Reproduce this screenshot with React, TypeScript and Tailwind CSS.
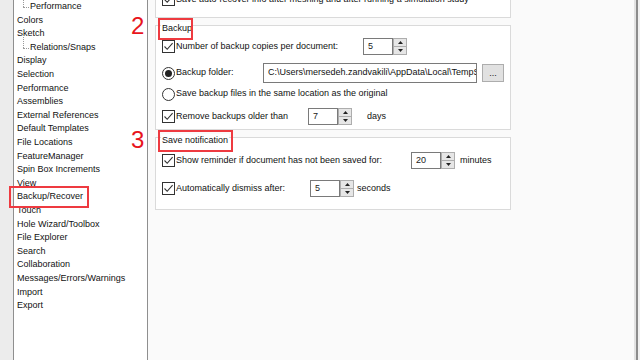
import type { ReactNode } from 'react'

const tree: { label: string; sub?: boolean }[] = [
  { label: 'Performance', sub: true },
  { label: 'Colors' },
  { label: 'Sketch' },
  { label: 'Relations/Snaps', sub: true },
  { label: 'Display' },
  { label: 'Selection' },
  { label: 'Performance' },
  { label: 'Assemblies' },
  { label: 'External References' },
  { label: 'Default Templates' },
  { label: 'File Locations' },
  { label: 'FeatureManager' },
  { label: 'Spin Box Increments' },
  { label: 'View' },
  { label: 'Backup/Recover' },
  { label: 'Touch' },
  { label: 'Hole Wizard/Toolbox' },
  { label: 'File Explorer' },
  { label: 'Search' },
  { label: 'Collaboration' },
  { label: 'Messages/Errors/Warnings' },
  { label: 'Import' },
  { label: 'Export' },
]

function Check() {
  return (
    <span className="flex h-[13px] w-[13px] shrink-0 items-center justify-center border border-[#333] bg-white">
      <svg width="11" height="11" viewBox="0 0 11 11">
        <path d="M1.5 5.5 L4.2 8.3 L9.6 2.2" fill="none" stroke="#333" strokeWidth="1.1" />
      </svg>
    </span>
  )
}

function Radio({ on }: { on?: boolean }) {
  return (
    <span className="flex h-[13px] w-[13px] shrink-0 items-center justify-center rounded-full border border-[#333] bg-white">
      {on && <span className="h-[7px] w-[7px] rounded-full bg-[#222]" />}
    </span>
  )
}

function Spin({ value, w = 30 }: { value: string; w?: number }) {
  return (
    <div className="flex h-[17px] shrink-0">
      <div
        className="flex items-center border border-[#7a7a7a] bg-white pl-[4px] text-[#222]"
        style={{ width: w }}
      >
        {value}
      </div>
      <div className="flex w-[14px] flex-col">
        <div className="flex flex-1 items-center justify-center border border-[#adadad] bg-[#e6e6e6]">
          <svg width="5" height="3" viewBox="0 0 5 3"><path d="M0 3 L2.5 0 L5 3Z" fill="#222" /></svg>
        </div>
        <div className="flex flex-1 items-center justify-center border border-t-0 border-[#adadad] bg-[#e6e6e6]">
          <svg width="5" height="3" viewBox="0 0 5 3"><path d="M0 0 L2.5 3 L5 0Z" fill="#222" /></svg>
        </div>
      </div>
    </div>
  )
}

function Group({ title, box, children, className }: { title: string; box: number; children: ReactNode; className: string }) {
  return (
    <div className={'relative w-[356px] border border-[#dadada] bg-white pl-[6px] ' + className}>
      <span className="absolute left-[5px] top-[-4px] bg-white px-[1px] leading-[12px]">{title}</span>
      {/* annotation box round the group title */}
      <span
        className="pointer-events-none absolute left-[2px] top-[-8px] h-[22px] border-2 border-[#ee3a40]"
        style={{ width: box }}
      />
      {children}
    </div>
  )
}

export default function App() {
  return (
    <div
      className="relative flex h-[360px] w-[640px] overflow-hidden bg-[#f0f0f0] text-[9px] text-[#111]"
      style={{ fontFamily: '"Liberation Sans", Arial, sans-serif' }}
    >
      <div className="w-[13px] shrink-0 bg-[#ececec]" />

      {/* tree */}
      <div className="w-[135px] shrink-0 border-x border-[#8f8f8f] bg-white pl-[3px]">
        <div>
          {tree.map((t, i) => (
            <div key={i} className="relative flex h-[13.6px] items-center whitespace-nowrap">
              {t.sub ? (
                <>
                  <span className="absolute left-[6px] top-[-4px] h-[11px] border-l border-dotted border-[#9a9a9a]" />
                  <span className="absolute left-[6px] top-[7px] w-[6px] border-t border-dotted border-[#9a9a9a]" />
                  <span className="pl-[13px]">{t.label}</span>
                </>
              ) : (
                <span>{t.label}</span>
              )}
            </div>
          ))}
        </div>
      </div>

      {/* options */}
      <div className="flex w-[486px] shrink-0 flex-col bg-[#fafafa] pl-[7px]">
        <div className="flex h-[18px] w-[356px] items-start border-x border-b border-[#dadada] bg-white pl-[6px]">
          <div className="mt-[-7px] flex items-center gap-[1px]">
            <Check />
            <span>Save auto-recover info after meshing and after running a simulation study</span>
          </div>
        </div>

        <Group title="Backup" box={35} className="mt-[7px] pb-[4px] pt-[12px]">
          <div className="flex h-[17px] items-center">
            <div className="flex w-[201px] items-center gap-[1px]">
              <Check />
              <span>Number of backup copies per document:</span>
            </div>
            <Spin value="5" />
          </div>
          <div className="mt-[8px] flex h-[20px] items-center">
            <div className="flex w-[101px] items-center gap-[1px]">
              <Radio on />
              <span>Backup folder:</span>
            </div>
            <div className="flex h-[20px] w-[214px] items-center overflow-hidden whitespace-nowrap border border-[#7a7a7a] bg-white pl-[4px]">
              C:\Users\mersedeh.zandvakili\AppData\Local\TempS
            </div>
            <button className="ml-[5px] flex h-[18px] w-[22px] items-end justify-center border border-[#adadad] bg-[#e1e1e1] pb-[3px] leading-[9px]">
              ...
            </button>
          </div>
          <div className="mt-[3px] flex h-[16px] items-center gap-[1px]">
            <Radio />
            <span>Save backup files in the same location as the original</span>
          </div>
          <div className="mt-[6px] flex h-[17px] items-center">
            <div className="flex w-[146px] items-center gap-[1px]">
              <Check />
              <span>Remove backups older than</span>
            </div>
            <Spin value="7" />
            <span className="ml-[15px]">days</span>
          </div>
        </Group>

        <Group title="Save notification" box={75} className="mt-[7px] pb-[12px] pt-[14px]">
          <div className="flex h-[17px] items-center">
            <div className="flex w-[249px] items-center gap-[1px]">
              <Check />
              <span>Show reminder if document has not been saved for:</span>
            </div>
            <Spin value="20" />
            <span className="ml-[5px]">minutes</span>
          </div>
          <div className="mt-[11px] flex h-[17px] items-center">
            <div className="flex w-[148px] items-center gap-[1px]">
              <Check />
              <span>Automatically dismiss after:</span>
            </div>
            <Spin value="5" />
            <span className="ml-[3px]">seconds</span>
          </div>
        </Group>
      </div>

      <div className="w-[2px] shrink-0 bg-[#e2e2e2]" />
      <div className="w-[2px] shrink-0 bg-[#8c8c8c]" />

      {/* annotations */}
      <span className="absolute left-[131px] top-[12px] text-[24px] leading-[28px] text-[#e8141c]">2</span>
      <span className="absolute left-[131px] top-[126px] text-[24px] leading-[28px] text-[#e8141c]">3</span>
      <span className="pointer-events-none absolute left-[9px] top-[186px] h-[22px] w-[80px] border-2 border-[#ee3a40]" />
    </div>
  )
}
